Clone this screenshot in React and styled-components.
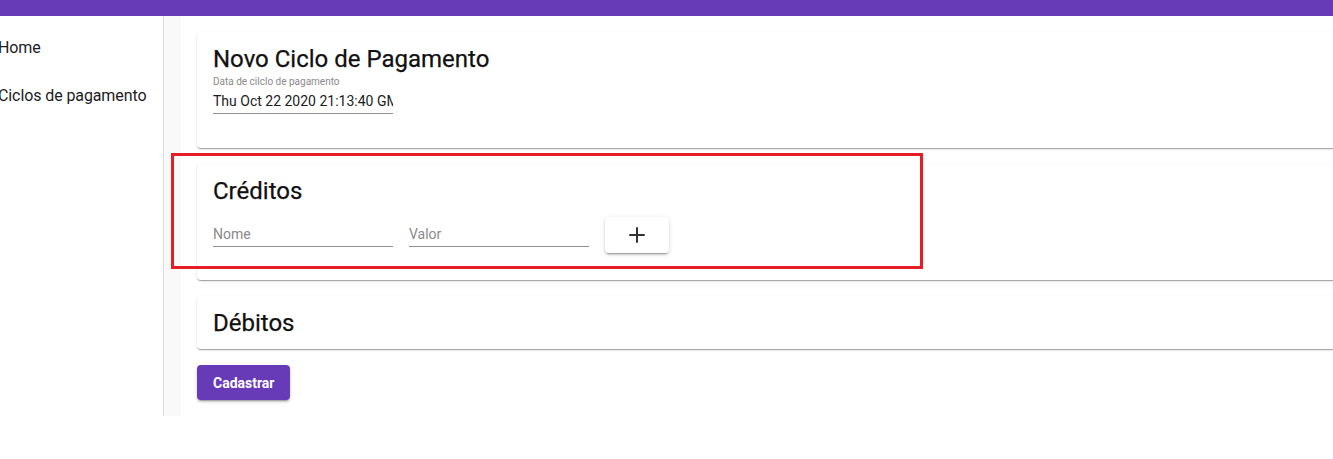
import styled, { createGlobalStyle } from 'styled-components';
import { Plus } from 'lucide-react';

const GlobalStyle = createGlobalStyle`
  html, body {
    margin: 0;
    padding: 0;
    background: #fff;
    overflow: hidden;
  }
  body {
    font-family: Roboto, "Liberation Sans", Arial, sans-serif;
    color: #1c1c1c;
  }
  * { box-sizing: border-box; }
`;

const menu = ['Home', 'Ciclos de pagamento'];

const Page = styled.div`
  position: relative;
  width: 1500px;
`;

const TopBar = styled.header`
  height: 16px;
  background: #673ab7;
`;

const Body = styled.div`
  display: flex;
  height: 400px;
`;

const Sidebar = styled.nav`
  width: 164px;
  flex-shrink: 0;
  border-right: 1px solid #dcdcdc;
  padding-top: 8px;
`;

const MenuItem = styled.div`
  padding: 12px 0;
  margin-left: -2px;
  font-size: 16px;
  line-height: 24px;
  letter-spacing: -0.1px;
  color: #1c1c1c;
  white-space: nowrap;
  cursor: pointer;
`;

const Main = styled.main`
  flex: 1;
  background: #f9f9f9;
  padding-left: 17px;
`;

const Content = styled.div`
  height: 100%;
  background: #fff;
  padding: 16px;
  display: flex;
  flex-direction: column;
  align-items: flex-start;
  gap: 16px;
`;

const Card = styled.section`
  align-self: stretch;
  background: #fff;
  border-radius: 4px;
  padding: 15px 16px ${p => p.$bottom || 13}px;
  box-shadow: 0px 2px 1px -1px rgba(0, 0, 0, 0.2), 0px 1px 1px 0px rgba(0, 0, 0, 0.14),
    0px 1px 3px 0px rgba(0, 0, 0, 0.12);
`;

const Title = styled.h2`
  margin: 0;
  font-size: 24px;
  line-height: 24px;
  font-weight: 400;
  color: #111;
  -webkit-text-stroke: 0.25px #111;
`;

const Field = styled.div`
  width: 180px;
  margin-top: 5px;
`;

const Label = styled.div`
  font-size: 10px;
  line-height: 12px;
  color: #8a8a8a;
  margin-bottom: 5px;
  white-space: nowrap;
`;

const Input = styled.input`
  display: block;
  width: 180px;
  height: 21px;
  margin: ${p => p.$top || 0}px 0 0;
  padding: 0 0 4px;
  border: none;
  border-bottom: 1px solid #8f8f8f;
  background: transparent;
  font-family: Roboto, "Liberation Sans", Arial, sans-serif;
  font-size: 14px;
  line-height: 16px;
  color: #1c1c1c;
  outline: none;
  &::placeholder {
    color: #8a8a8a;
    opacity: 1;
  }
`;

const Row = styled.div`
  display: flex;
  align-items: flex-start;
  gap: 16px;
  margin-top: 14px;
`;

const AddButton = styled.button`
  width: 64px;
  height: 36px;
  display: flex;
  align-items: center;
  justify-content: center;
  border: none;
  border-radius: 4px;
  background: #fff;
  color: #333;
  cursor: pointer;
  box-shadow: 0px 3px 1px -2px rgba(0, 0, 0, 0.2), 0px 2px 2px 0px rgba(0, 0, 0, 0.14),
    0px 1px 5px 0px rgba(0, 0, 0, 0.12);
`;

const SubmitButton = styled.button`
  height: 36px;
  padding: 0 16px;
  border: none;
  border-radius: 4px;
  background: #673ab7;
  color: #fff;
  font-family: Roboto, "Liberation Sans", Arial, sans-serif;
  font-size: 14px;
  font-weight: 700;
  cursor: pointer;
  box-shadow: 0px 3px 1px -2px rgba(0, 0, 0, 0.2), 0px 2px 2px 0px rgba(0, 0, 0, 0.14),
    0px 1px 5px 0px rgba(0, 0, 0, 0.12);
`;

const Highlight = styled.div`
  position: absolute;
  left: 171px;
  top: 153px;
  width: 752px;
  height: 116px;
  border: 3px solid #e51d25;
  pointer-events: none;
`;

const App = () => (
  <Page>
    <GlobalStyle />
    <TopBar />
    <Body>
      <Sidebar>
        {menu.map(item => (
          <MenuItem key={item}>{item}</MenuItem>
        ))}
      </Sidebar>
      <Main>
        <Content>
          <Card $bottom={34}>
            <Title>Novo Ciclo de Pagamento</Title>
            <Field>
              <Label>Data de cilclo de pagamento</Label>
              <Input defaultValue="Thu Oct 22 2020 21:13:40 GMT-0300 (Horário Padrão de Brasília)" />
            </Field>
          </Card>
          <Card $bottom={27}>
            <Title>Créditos</Title>
            <Row>
              <Input $top={9} placeholder="Nome" />
              <Input $top={9} placeholder="Valor" />
              <AddButton>
                <Plus size={24} strokeWidth={2} />
              </AddButton>
            </Row>
          </Card>
          <Card $bottom={14}>
            <Title>Débitos</Title>
          </Card>
          <SubmitButton>Cadastrar</SubmitButton>
        </Content>
      </Main>
    </Body>
    <Highlight />
  </Page>
);

export default App;
